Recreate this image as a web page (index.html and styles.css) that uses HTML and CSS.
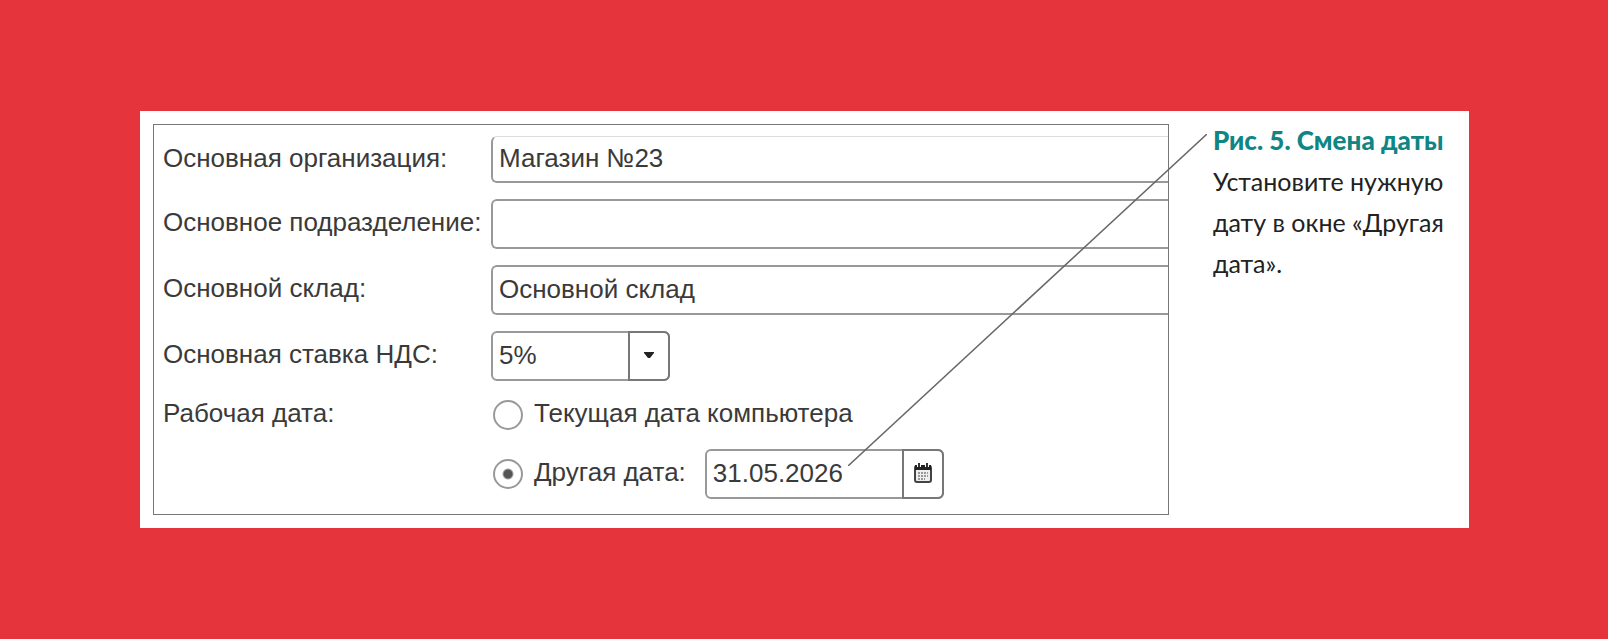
FILE: index.html
```
<!DOCTYPE html>
<html lang="ru">
<head>
  <meta charset="UTF-8">
  <meta name="viewport" content="width=device-width, initial-scale=1">
  <title>Смена даты</title>
  <link rel="stylesheet" href="styles.css">
</head>
<body>

<figure class="card">
  <form class="settings">
    <div class="row">
      <label class="row-label" for="org">Основная организация:</label>
      <input class="field field-cut" type="text" id="org" value="Магазин №23">
    </div>

    <div class="row">
      <label class="row-label" for="dept">Основное подразделение:</label>
      <input class="field" type="text" id="dept">
    </div>

    <div class="row">
      <label class="row-label" for="store">Основной склад:</label>
      <input class="field" type="text" id="store" value="Основной склад">
    </div>

    <div class="row">
      <label class="row-label" for="vat">Основная ставка НДС:</label>
      <div class="combo combo-vat">
        <select class="combo-value" id="vat">
          <option>5%</option>
        </select>
        <span class="combo-side combo-arrow">
          <svg width="10" height="6" viewBox="0 0 10 6"><path d="M0 0h10v1L6 6H4L0 1z" fill="#222"/></svg>
        </span>
      </div>
    </div>

    <div class="row" role="radiogroup" aria-labelledby="workdate">
      <span class="row-label" id="workdate">Рабочая дата:</span>
      <div class="choice">
        <input class="radio" type="radio" name="date" id="today">
        <label for="today">Текущая дата компьютера</label>
      </div>
    </div>

    <div class="row">
      <div class="choice choice-other">
        <input class="radio" type="radio" name="date" id="other" checked>
        <label for="other">Другая дата:</label>
        <div class="combo combo-date">
          <input class="combo-value" type="text" value="31.05.2026" aria-label="Другая дата">
          <button class="combo-side" type="button" aria-label="Календарь">
            <svg width="18" height="20" viewBox="0 0 18 20">
              <rect x="1" y="3" width="16" height="16" rx="2" fill="#eee" stroke="#444" stroke-width="2"/>
              <path d="M1 2h16v5H1z" fill="#222"/>
              <path d="M5 0v4M13 0v4" stroke="#fff" stroke-width="4"/>
              <path d="M5 0v4M13 0v4" stroke="#333" stroke-width="2"/>
              <path d="M4 10h10M4 13h10M4 16h7" stroke="#999" stroke-width="2" stroke-dasharray="2 1"/>
            </svg>
          </button>
        </div>
      </div>
    </div>
  </form>

  <figcaption class="caption">
    <strong class="caption-title">Рис. 5. Смена даты</strong>
    Установите нужную дату в окне «Другая дата».
  </figcaption>

  <!-- выноска от даты к подписи -->
  <svg class="leader" viewBox="0 0 100 100" preserveAspectRatio="none">
    <path d="M0 100L100 0"/>
  </svg>
</figure>

</body>
</html>
```

FILE: styles.css
```
* {
  box-sizing: border-box;
}
body {
  margin: 0;
  min-height: 100vh;
  padding: 0 139px 0 140px;
  background-color: #e5343b;
  display: flex;
  align-items: center;
}
.card {
  position: relative;
  flex: 1;
  display: flex;
  gap: 44px;
  margin: 0;
  padding: 13px;
  background-color: #fff;
}

/* Форма */
.settings {
  flex: 1;
  display: flex;
  flex-direction: column;
  gap: 16px;
  padding: 11px 0 15px 9px;
  border: 1px solid #777;
  font-family: "Liberation Sans", Arial, sans-serif;
  font-size: 26px;
  line-height: 30px;
  color: #3a3a3a;
}
.row {
  display: flex;
  align-items: center;
}
.row-label {
  width: 328px;
  padding-bottom: 4px;
}
.field,
.combo {
  height: 50px;
  border: 2px solid #999;
  border-radius: 6px;
  background-color: #fff;
}
.field {
  flex: 1;
  min-width: 0;
  padding: 0 6px 2px;
  border-right: 0;
  border-radius: 6px 0 0 6px;
  font: inherit;
  color: inherit;
}
.field-cut {
  height: 47px;
  border-top: 1px solid #ddd;
}

/* Поля с кнопкой справа */
.combo {
  position: relative;
  display: flex;
}
.combo-vat {
  width: 179px;
}
.combo-date {
  width: 239px;
  margin-left: 8px;
}
.combo-value {
  flex: 1;
  min-width: 0;
  padding: 0 6px 2px;
  border: 0;
  background: none;
  appearance: none;
  font: inherit;
  color: inherit;
}
.combo-side {
  display: flex;
  align-items: center;
  justify-content: center;
  width: 42px;
  margin: -2px -2px -2px 0;
  padding: 0 0 2px;
  border: 2px solid #777;
  border-radius: 0 6px 6px 0;
  background: none;
}
.combo-arrow {
  position: absolute;
  top: 0;
  right: 0;
  bottom: 0;
  pointer-events: none;
}

/* Переключатели */
.choice {
  display: flex;
  align-items: center;
  gap: 11px;
  min-height: 36px;
}
.choice label {
  padding-bottom: 4px;
}
.choice-other {
  margin-left: 328px;
}
.radio {
  appearance: none;
  width: 30px;
  height: 30px;
  margin: 0 0 0 2px;
  border: 2px solid #999;
  border-radius: 50%;
}
.radio:checked {
  background: radial-gradient(circle, #555 4px, transparent 6px);
}

/* Подпись */
.caption {
  width: 243px;
  margin-top: -4px;
  font-family: Lato, "Open Sans", sans-serif;
  font-size: 25px;
  line-height: 41px;
  color: #222;
}
.caption-title {
  display: block;
  font-size: 26px;
  font-weight: 900;
  color: #0f8584;
}
.leader {
  position: absolute;
  top: 23px;
  left: 708px;
  width: calc(100% - 970px);
  height: 332px;
  pointer-events: none;
}
.leader path {
  fill: none;
  stroke: #666;
  stroke-width: 1.5;
  vector-effect: non-scaling-stroke;
}
```
